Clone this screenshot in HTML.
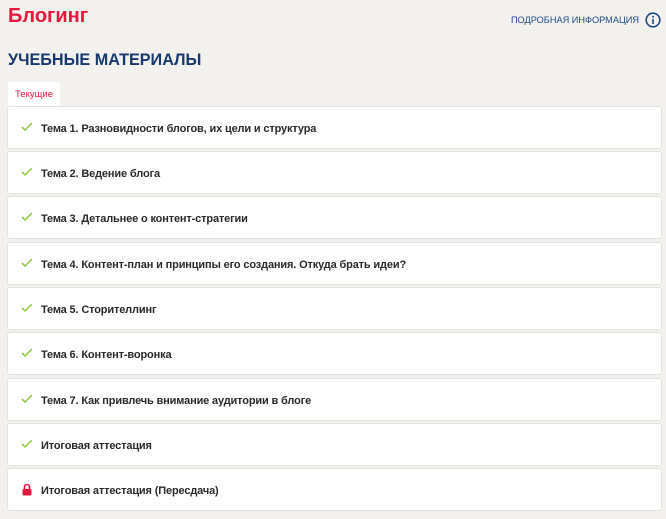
<!DOCTYPE html>
<html><head><meta charset="utf-8"><style>
*{margin:0;padding:0;box-sizing:border-box}
body{width:666px;height:519px;background:#f2f1ee;font-family:"Liberation Sans",sans-serif;position:relative;overflow:hidden}
.t{position:absolute;left:8px;top:5px;font-size:20px;font-weight:bold;color:#e8173e}
.info{position:absolute;right:5px;top:12px;font-size:9.2px;color:#1e4a86;display:flex;align-items:center;gap:6px}
.h{position:absolute;left:8px;top:51px;font-size:16.2px;font-weight:bold;color:#17396b}
.tab{position:absolute;left:8px;top:82px;width:52px;height:24px;background:#fff;border-radius:3px 3px 0 0;font-size:9.5px;color:#e8173e;padding:7px 0 0 7px}
.row{position:absolute;left:7px;width:655px;height:43px;background:#fff;border:1px solid #e2e1dd;border-radius:3px;font-size:11px;font-weight:bold;letter-spacing:-0.15px;color:#2a2a2a;display:flex;align-items:center;padding-left:33px;padding-top:2px}
.ic{position:absolute;left:13px;top:15px}
</style></head><body>
<div class="t">Блогинг</div>
<div class="info">ПОДРОБНАЯ ИНФОРМАЦИЯ <svg width="16" height="16" viewBox="0 0 16 16"><circle cx="8" cy="8" r="6.8" fill="none" stroke="#1e4a86" stroke-width="1.6"/><rect x="7.2" y="7" width="1.6" height="5" fill="#1e4a86"/><circle cx="8" cy="4.8" r="1" fill="#1e4a86"/></svg></div>
<div class="h">УЧЕБНЫЕ МАТЕРИАЛЫ</div>
<div class="tab">Текущие</div>
<div class="row" style="top:106px"><svg class="ic" width="12" height="10" viewBox="0 0 12 10"><path d="M1 5l3 3 7-7" fill="none" stroke="#8cc63f" stroke-width="1.5"/></svg>Тема 1. Разновидности блогов, их цели и структура</div>
<div class="row" style="top:151px"><svg class="ic" width="12" height="10" viewBox="0 0 12 10"><path d="M1 5l3 3 7-7" fill="none" stroke="#8cc63f" stroke-width="1.5"/></svg>Тема 2. Ведение блога</div>
<div class="row" style="top:196px"><svg class="ic" width="12" height="10" viewBox="0 0 12 10"><path d="M1 5l3 3 7-7" fill="none" stroke="#8cc63f" stroke-width="1.5"/></svg>Тема 3. Детальнее о контент-стратегии</div>
<div class="row" style="top:242px"><svg class="ic" width="12" height="10" viewBox="0 0 12 10"><path d="M1 5l3 3 7-7" fill="none" stroke="#8cc63f" stroke-width="1.5"/></svg>Тема 4. Контент-план и принципы его создания. Откуда брать идеи?</div>
<div class="row" style="top:287px"><svg class="ic" width="12" height="10" viewBox="0 0 12 10"><path d="M1 5l3 3 7-7" fill="none" stroke="#8cc63f" stroke-width="1.5"/></svg>Тема 5. Сторителлинг</div>
<div class="row" style="top:332px"><svg class="ic" width="12" height="10" viewBox="0 0 12 10"><path d="M1 5l3 3 7-7" fill="none" stroke="#8cc63f" stroke-width="1.5"/></svg>Тема 6. Контент-воронка</div>
<div class="row" style="top:378px"><svg class="ic" width="12" height="10" viewBox="0 0 12 10"><path d="M1 5l3 3 7-7" fill="none" stroke="#8cc63f" stroke-width="1.5"/></svg>Тема 7. Как привлечь внимание аудитории в блоге</div>
<div class="row" style="top:423px"><svg class="ic" width="12" height="10" viewBox="0 0 12 10"><path d="M1 5l3 3 7-7" fill="none" stroke="#8cc63f" stroke-width="1.5"/></svg>Итоговая аттестация</div>
<div class="row" style="top:468px"><svg class="ic" style="top:14px" width="12" height="13" viewBox="0 0 12 13"><path d="M3.5 6V4a2.5 2.5 0 0 1 5 0v2" fill="none" stroke="#e8173e" stroke-width="1.6"/><rect x="1.5" y="6" width="9" height="6.5" rx="1" fill="#e8173e"/></svg>Итоговая аттестация (Пересдача)</div>
</body></html>
